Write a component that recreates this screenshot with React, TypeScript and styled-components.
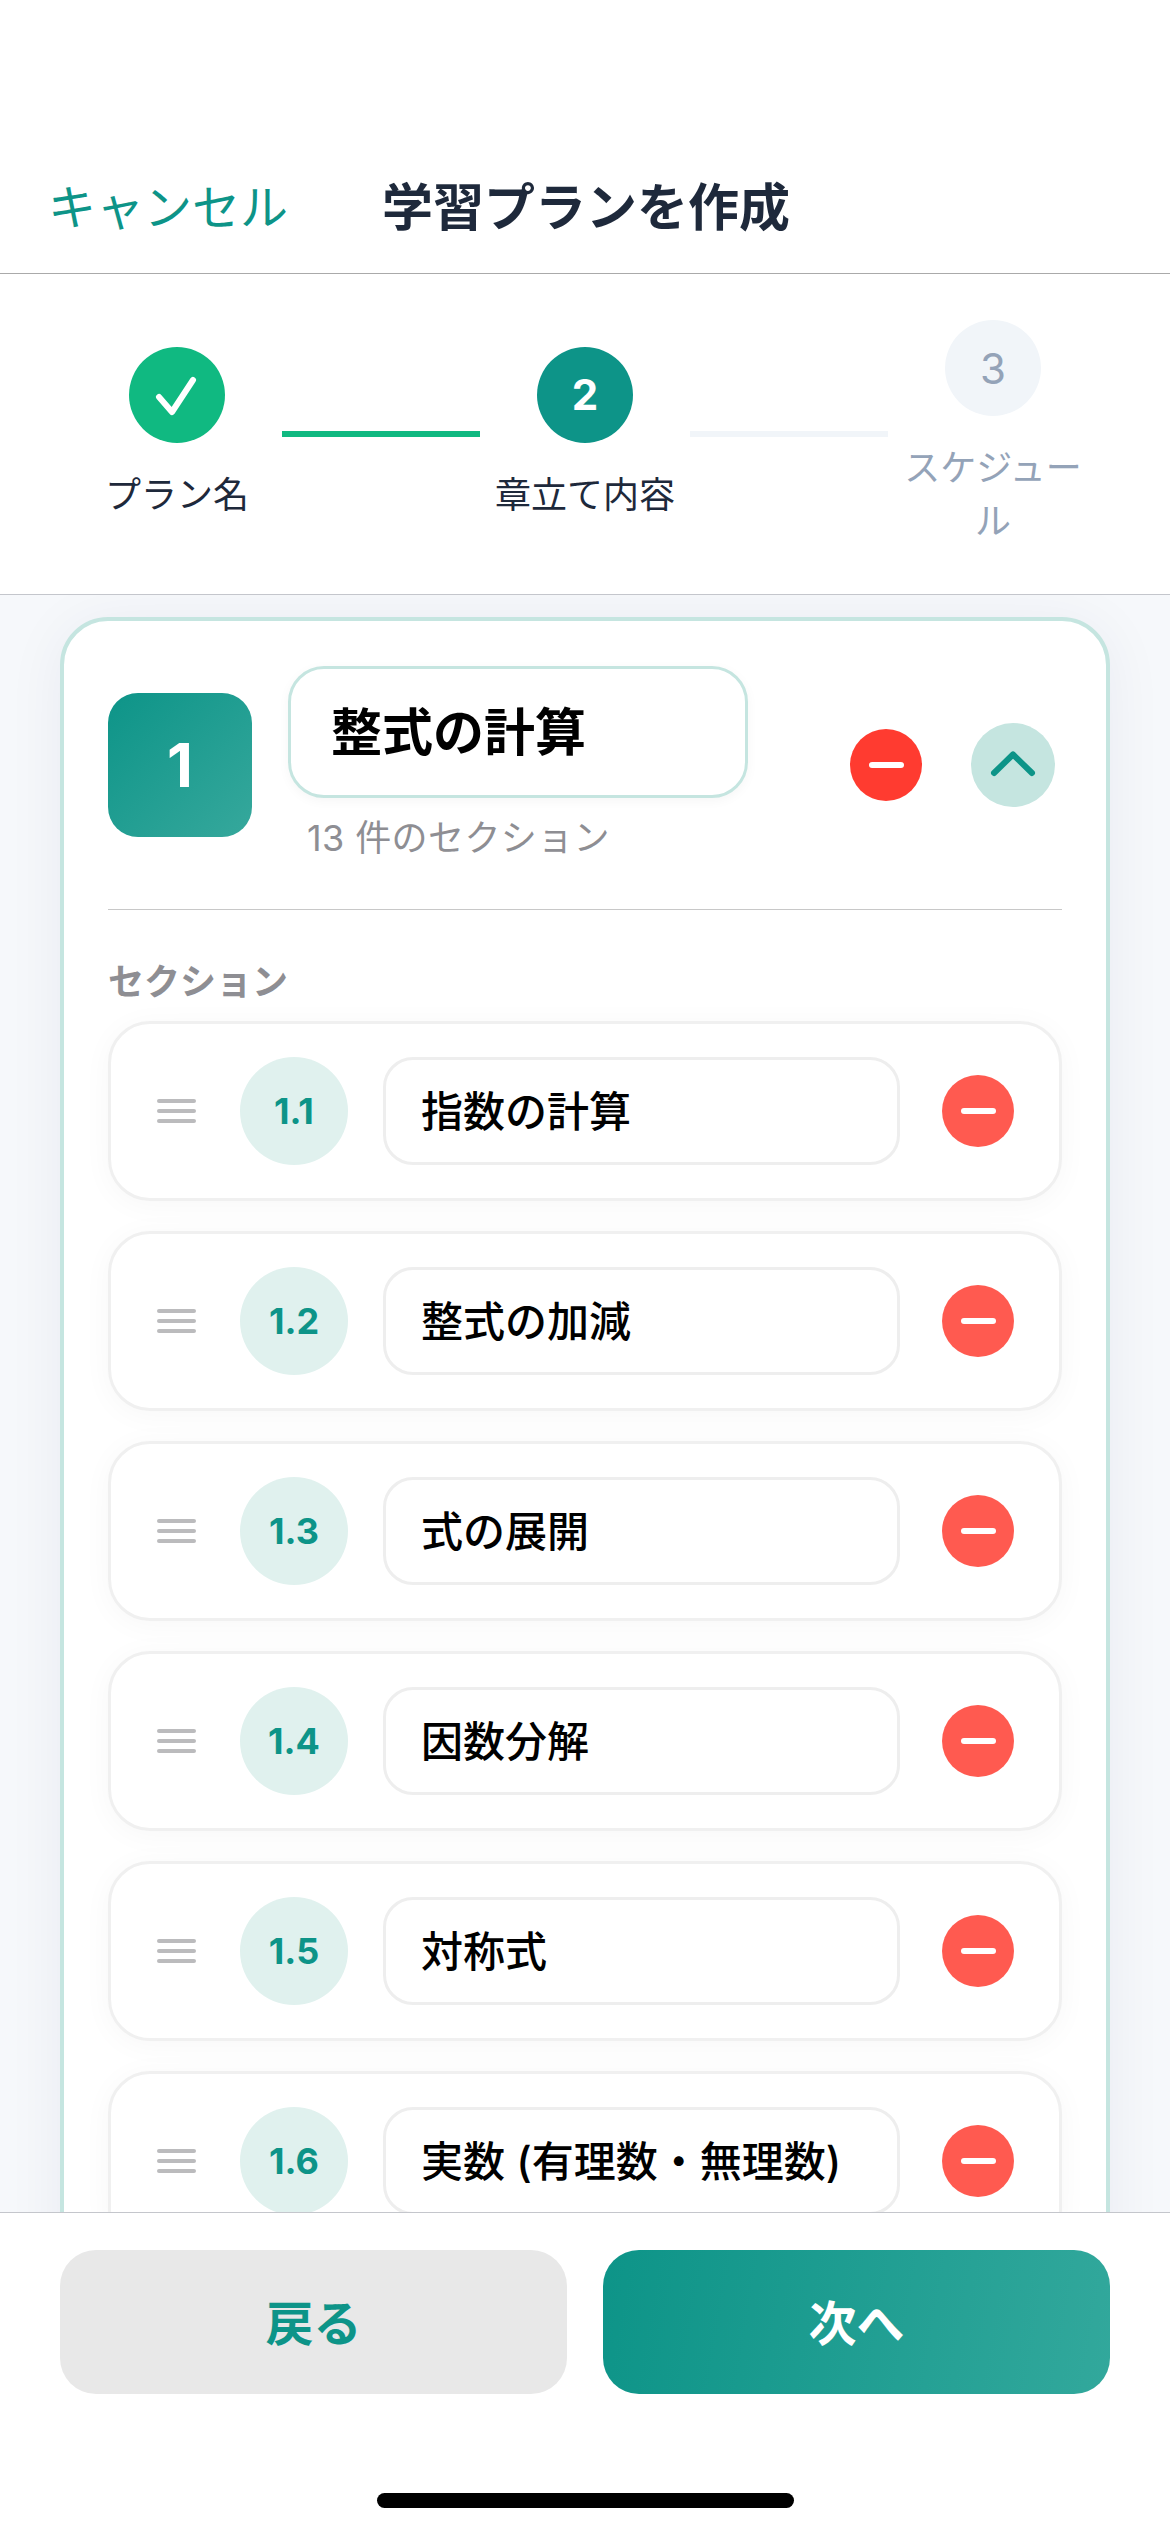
import React from 'react';
import styled, { createGlobalStyle } from 'styled-components';

const Global = createGlobalStyle`
  html, body { margin: 0; padding: 0; background: #fff; }
  body { font-family: Inter, "Noto Sans CJK JP", sans-serif; }
  * { box-sizing: border-box; }
`;

const Screen = styled.div`
  width: 1170px;
  height: 2532px;
  display: flex;
  flex-direction: column;
  background: #fff;
  overflow: hidden;
`;

const Header = styled.header`
  height: 274px;
  flex: none;
  padding: 172px 48px 0;
  display: flex;
  align-items: flex-start;
  gap: 94px;
  border-bottom: 1px solid #aaaaaa;
`;

const Cancel = styled.span`
  font-size: 48px;
  line-height: 72px;
  color: #0d9488;
`;

const Title = styled.h1`
  margin: 0;
  font-size: 51px;
  line-height: 72px;
  font-weight: 700;
  color: #1e293b;
`;

const Stepper = styled.div`
  flex: none;
  height: 321px;
  padding: 0 87px 0;
  display: flex;
  align-items: center;
  justify-content: center;
  border-bottom: 1px solid #c4c6cc;
`;

const Step = styled.div`
  width: 180px;
  flex: none;
  display: flex;
  flex-direction: column;
  align-items: center;
  gap: 26px;
`;

const StepCircle = styled.div<{ $state: 'done' | 'active' | 'todo' }>`
  width: 96px;
  height: 96px;
  border-radius: 50%;
  display: flex;
  align-items: center;
  justify-content: center;
  font-size: 42px;
  font-weight: ${p => (p.$state === 'todo' ? 400 : 700)};
  color: ${p => (p.$state === 'todo' ? '#94a3b8' : '#fff')};
  background: ${p =>
    p.$state === 'done' ? '#10b981' : p.$state === 'active' ? '#0d9488' : '#f1f5f9'};
`;

const StepLabel = styled.div<{ $muted?: boolean }>`
  font-size: 36px;
  line-height: 53px;
  text-align: center;
  color: ${p => (p.$muted ? '#94a3b8' : '#1e293b')};
`;

const Connector = styled.div<{ $on?: boolean }>`
  flex: none;
  width: 198px;
  height: 6px;
  margin: 0 15px;
  background: ${p => (p.$on ? '#10b981' : '#f1f5f9')};
`;

const Body = styled.main`
  flex: 1;
  min-height: 0;
  overflow: hidden;
  padding: 22px 60px 0;
  background: #f6f8fb;
`;

const Card = styled.section`
  background: #fff;
  border: 4px solid #c5e5e0;
  border-radius: 48px;
  padding: 45px 44px 44px;
  box-shadow: 0 6px 60px rgba(30, 40, 80, 0.06);
`;

const ChapterHead = styled.div`
  display: flex;
  align-items: flex-start;
`;

const ChapterBadge = styled.div`
  flex: none;
  width: 144px;
  height: 144px;
  margin-top: 27px;
  border-radius: 30px;
  background: linear-gradient(135deg, #0d9488, #36a89c);
  color: #fff;
  font-size: 60px;
  font-weight: 700;
  display: flex;
  align-items: center;
  justify-content: center;
`;

const ChapterInfo = styled.div`
  flex: none;
  width: 460px;
  margin-left: 36px;
`;

const ChapterInput = styled.div`
  height: 132px;
  padding: 0 40px 7px;
  display: flex;
  align-items: center;
  border: 3px solid #c5e5e0;
  border-radius: 36px;
  background: #fff;
  font-size: 51px;
  font-weight: 700;
  color: #000;
  box-shadow: 0 3px 12px rgba(0, 0, 0, 0.04);
`;

const ChapterCount = styled.div`
  margin: 16px 0 0 19px;
  font-size: 36px;
  line-height: 48px;
  letter-spacing: 0.4px;
  color: #8e8e93;
`;

const HeadActions = styled.div`
  flex: none;
  margin-left: 102px;
  margin-top: 57px;
  display: flex;
  align-items: center;
  gap: 49px;
`;

const MinusButton = styled.div<{ $soft?: boolean }>`
  flex: none;
  width: 72px;
  height: 72px;
  border-radius: 50%;
  background: ${p => (p.$soft ? '#ff5a50' : '#ff3b30')};
  display: flex;
  align-items: center;
  justify-content: center;
  &::after {
    content: '';
    width: 35px;
    height: 6px;
    border-radius: 3px;
    background: #fff;
  }
`;

const ChevronButton = styled.div`
  flex: none;
  width: 84px;
  height: 84px;
  border-radius: 50%;
  background: #c5e5e0;
  display: flex;
  align-items: center;
  justify-content: center;
`;

const Divider = styled.div`
  height: 1px;
  margin-top: 47px;
  background: #c8c8c8;
`;

const SectionLabel = styled.div`
  margin-top: 48px;
  font-size: 36px;
  line-height: 48px;
  font-weight: 600;
  color: #8e8e93;
`;

const Rows = styled.div`
  margin-top: 15px;
  display: flex;
  flex-direction: column;
  gap: 30px;
`;

const Row = styled.div`
  height: 180px;
  padding: 0 45px 0 46px;
  display: flex;
  align-items: center;
  border: 3px solid #f0f0f0;
  border-radius: 42px;
  background: #fff;
  box-shadow: 0 4px 30px rgba(0, 0, 0, 0.035);
`;

const Handle = styled.div`
  flex: none;
  width: 39px;
  height: 24px;
  display: flex;
  flex-direction: column;
  justify-content: space-between;
  & > i {
    display: block;
    height: 4px;
    border-radius: 2px;
    background: #bbbbbd;
  }
`;

const RowNumber = styled.div`
  flex: none;
  width: 108px;
  height: 108px;
  margin-left: 44px;
  border-radius: 50%;
  background: #e0f1ee;
  color: #0d9488;
  font-size: 36px;
  font-weight: 700;
  display: flex;
  align-items: center;
  justify-content: center;
`;

const RowInput = styled.div`
  flex: none;
  width: 517px;
  height: 108px;
  margin-left: 35px;
  padding: 0 35px 5px;
  display: flex;
  align-items: center;
  border: 3px solid #eeeeee;
  border-radius: 30px;
  font-size: 42px;
  font-weight: 500;
  color: #000;
  white-space: nowrap;
  overflow: hidden;
`;

const RowAction = styled.div`
  margin-left: 42px;
`;

const Footer = styled.footer`
  flex: none;
  height: 320px;
  padding: 37px 60px 0;
  border-top: 1px solid #c4c6cc;
  background: #fff;
  position: relative;
`;

const Buttons = styled.div`
  display: flex;
  gap: 36px;
`;

const FooterButton = styled.div<{ $primary?: boolean }>`
  flex: 1;
  height: 144px;
  padding-bottom: 4px;
  border-radius: 36px;
  display: flex;
  align-items: center;
  justify-content: center;
  font-size: 48px;
  font-weight: 700;
  color: ${p => (p.$primary ? '#fff' : '#0d9488')};
  background: ${p =>
    p.$primary ? 'linear-gradient(100deg, #0d9488, #32a89c)' : '#e8e8e8'};
`;

const HomeBar = styled.div`
  position: absolute;
  left: 377px;
  top: 280px;
  width: 417px;
  height: 15px;
  border-radius: 8px;
  background: #000;
`;

const sections = [
  ['1.1', '指数の計算'],
  ['1.2', '整式の加減'],
  ['1.3', '式の展開'],
  ['1.4', '因数分解'],
  ['1.5', '対称式'],
  ['1.6', '実数 (有理数・無理数)'],
];

export default function App() {
  return (
    <Screen>
      <Global />
      <Header>
        <Cancel>キャンセル</Cancel>
        <Title>学習プランを作成</Title>
      </Header>
      <Stepper>
        <Step>
          <StepCircle $state="done">
            <svg width="48" height="48" viewBox="0 0 48 48" fill="none" stroke="#fff" strokeWidth="6" strokeLinecap="round" strokeLinejoin="round">
              <path d="M6 26 L19 41 L40 9" />
            </svg>
          </StepCircle>
          <StepLabel>プラン名</StepLabel>
        </Step>
        <Connector $on />
        <Step>
          <StepCircle $state="active">2</StepCircle>
          <StepLabel>章立て内容</StepLabel>
        </Step>
        <Connector />
        <Step>
          <StepCircle $state="todo">3</StepCircle>
          <StepLabel $muted>スケジュール</StepLabel>
        </Step>
      </Stepper>
      <Body>
        <Card>
          <ChapterHead>
            <ChapterBadge>1</ChapterBadge>
            <ChapterInfo>
              <ChapterInput>整式の計算</ChapterInput>
              <ChapterCount>13 件のセクション</ChapterCount>
            </ChapterInfo>
            <HeadActions>
              <MinusButton />
              <ChevronButton>
                <svg width="48" height="30" viewBox="0 0 48 30" fill="none" stroke="#0d9488" strokeWidth="6" strokeLinecap="round" strokeLinejoin="round">
                  <path d="M5 23 L24 4.5 L43 23" />
                </svg>
              </ChevronButton>
            </HeadActions>
          </ChapterHead>
          <Divider />
          <SectionLabel>セクション</SectionLabel>
          <Rows>
            {sections.map(([n, t]) => (
              <Row key={n}>
                <Handle><i /><i /><i /></Handle>
                <RowNumber>{n}</RowNumber>
                <RowInput>{t}</RowInput>
                <RowAction><MinusButton $soft /></RowAction>
              </Row>
            ))}
          </Rows>
        </Card>
      </Body>
      <Footer>
        <Buttons>
          <FooterButton>戻る</FooterButton>
          <FooterButton $primary>次へ</FooterButton>
        </Buttons>
        <HomeBar />
      </Footer>
    </Screen>
  );
}
